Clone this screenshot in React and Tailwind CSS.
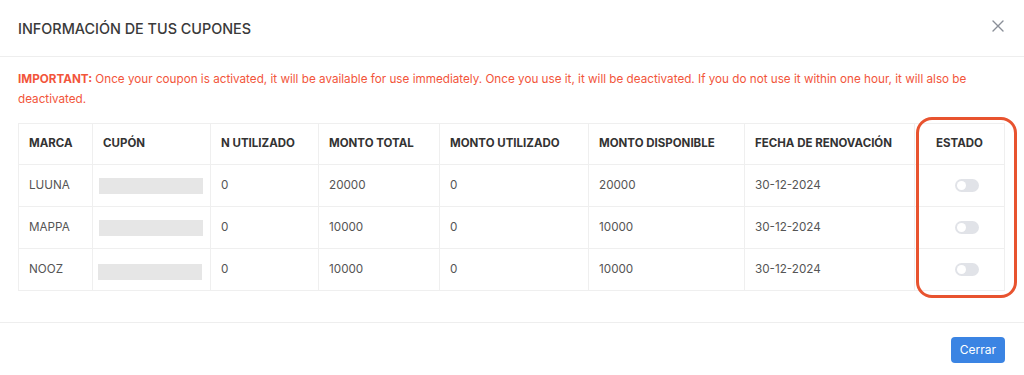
import React from 'react'

const rows = [
  { marca: 'LUUNA', n: '0', total: '20000', usado: '0', disp: '20000', fecha: '30-12-2024' },
  { marca: 'MAPPA', n: '0', total: '10000', usado: '0', disp: '10000', fecha: '30-12-2024' },
  { marca: 'NOOZ', n: '0', total: '10000', usado: '0', disp: '10000', fecha: '30-12-2024' },
]

const headers = [
  ['MARCA', 'w-[74px]'],
  ['CUPÓN', 'w-[118px]'],
  ['N UTILIZADO', 'w-[108px]'],
  ['MONTO TOTAL', 'w-[121px]'],
  ['MONTO UTILIZADO', 'w-[149px]'],
  ['MONTO DISPONIBLE', 'w-[156px]'],
  ['FECHA DE RENOVACIÓN', 'w-[170px]'],
  ['ESTADO', 'w-[90px]'],
]

function Toggle() {
  return (
    <div className="w-[24px] h-[13px] rounded-full bg-[#e1e3e8] flex items-center px-[2px]">
      <div className="w-[9px] h-[9px] rounded-full bg-white" />
    </div>
  )
}

export default function App() {
  return (
    <div className="w-[1024px] h-[375px] bg-white relative overflow-hidden text-[#333]" style={{ fontFamily: 'Inter, "Noto Sans", sans-serif' }}>
      {/* header */}
      <div className="h-[57px] border-b border-[#eeeeee] flex items-center justify-between pl-[18px] pr-[20px]">
        <h2 className="text-[14.4px] font-medium text-[#3a3a3a] mt-[2px]">INFORMACIÓN DE TUS CUPONES</h2>
        <svg width="12" height="12" viewBox="0 0 12 12" className="mt-[-4px]">
          <path d="M1 1L11 11M11 1L1 11" stroke="#8a8f98" strokeWidth="1.4" strokeLinecap="round" />
        </svg>
      </div>

      {/* body */}
      <div className="px-[18px] pt-[12px] pb-[31px] border-b border-[#eeeeee]">
        <p className="text-[11.7px] leading-[20px] text-[#f2553b] pr-[20px]">
          <span className="font-bold">IMPORTANT:</span> Once your coupon is activated, it will be available for use immediately. Once you use it, it will be deactivated. If you do not use it within one hour, it will also be deactivated.
        </p>
        <table className="mt-[14px] border-collapse border border-[#efefef] w-[987px] table-fixed">
          <thead>
            <tr className="h-[41px]">
              {headers.map(([h, w], i) => (
                <th key={h} className={`${w} border border-[#efefef] text-[11.5px] font-bold text-[#333] ${i === 7 ? 'text-center' : 'text-left pl-[10px]'}`}>{h}</th>
              ))}
            </tr>
          </thead>
          <tbody>
            {rows.map((r, i) => (
              <tr key={r.marca} className="h-[42px] text-[11.7px] text-[#555]">
                <td className="border border-[#efefef] pl-[10px]">{r.marca}</td>
                <td className="border border-[#efefef] pl-[6px]">
                  <div className={`h-[16px] w-[104px] bg-[#e6e6e6] ${i === 2 ? 'mt-[4px] ml-[-1px]' : ''}`} />
                </td>
                <td className="border border-[#efefef] pl-[10px]">{r.n}</td>
                <td className="border border-[#efefef] pl-[10px]">{r.total}</td>
                <td className="border border-[#efefef] pl-[10px]">{r.usado}</td>
                <td className="border border-[#efefef] pl-[10px]">{r.disp}</td>
                <td className="border border-[#efefef] pl-[10px]">{r.fecha}</td>
                <td className="border border-[#efefef]">
                  <div className="flex justify-center pl-[14px]"><Toggle /></div>
                </td>
              </tr>
            ))}
          </tbody>
        </table>
      </div>

      {/* footer */}
      <div className="flex justify-end pr-[19px] pt-[14px]">
        <button className="h-[26px] px-[9px] rounded-[4px] bg-[#3b84e3] text-white text-[12px]">Cerrar</button>
      </div>

      {/* annotation highlight */}
      <div className="absolute left-[916px] top-[117px] w-[101px] h-[181px] border-[3px] border-[#e8532f] rounded-[16px] pointer-events-none" />
    </div>
  )
}
